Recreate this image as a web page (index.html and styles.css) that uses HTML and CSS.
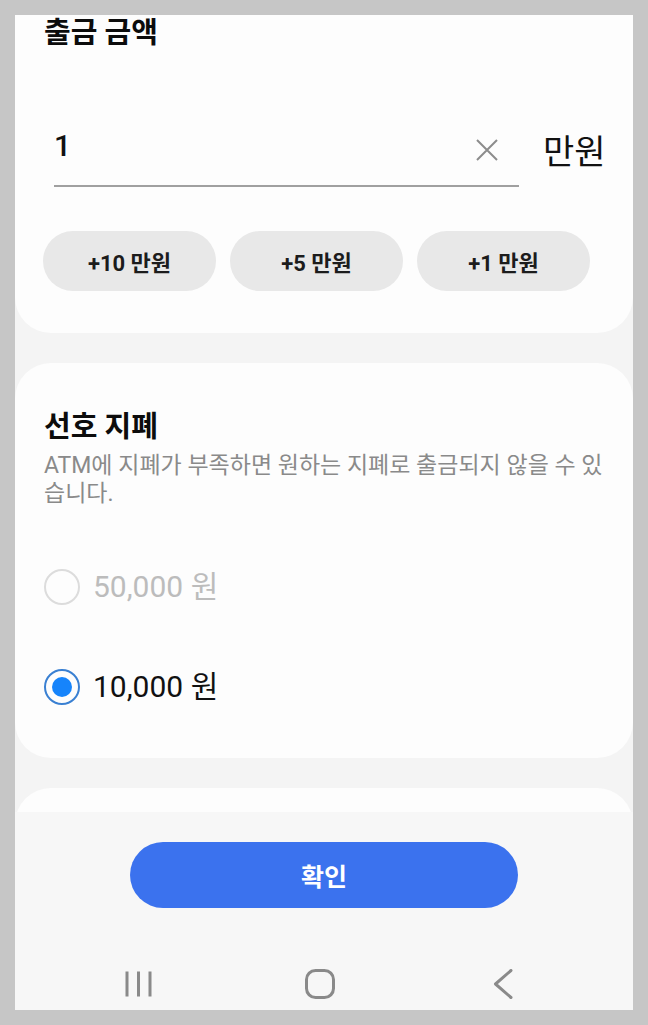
FILE: index.html
```html
<!DOCTYPE html>
<html lang="ko">

<head>
    <meta charset="UTF-8">
    <meta name="viewport" content="width=device-width, initial-scale=1.0">
    <title>출금 금액</title>
    <link rel="stylesheet" href="styles.css">
</head>

<body>
    <div class="screen">
        <main class="content">
            <!-- Amount -->
            <section class="card card-amount">
                <h2 class="card-title">출금 금액</h2>
                <div class="amount-row">
                    <div class="amount-input">
                        <span class="amount-value">1</span>
                        <svg class="clear-icon" width="22" height="22" viewBox="0 0 22 22">
                            <path d="M1 1 L21 21 M21 1 L1 21" stroke="#8c8c8c" stroke-width="2" fill="none" />
                        </svg>
                    </div>
                    <span class="amount-unit">만원</span>
                </div>
                <div class="chips">
                    <button class="chip">+10 만원</button>
                    <button class="chip">+5 만원</button>
                    <button class="chip">+1 만원</button>
                </div>
            </section>

            <!-- Preferred bills -->
            <section class="card card-bills">
                <h2 class="card-title">선호 지폐</h2>
                <p class="card-desc">ATM에 지폐가 부족하면 원하는 지폐로 출금되지 않을 수 있습니다.</p>
                <ul class="radio-list">
                    <li class="radio-item disabled">
                        <span class="radio"></span>
                        <span class="radio-label">50,000 원</span>
                    </li>
                    <li class="radio-item checked">
                        <span class="radio"></span>
                        <span class="radio-label">10,000 원</span>
                    </li>
                </ul>
            </section>

            <section class="card card-next"></section>
        </main>

        <footer class="bottom">
            <button class="btn-confirm">확인</button>
            <nav class="navbar">
                <svg class="nav-recent" width="28" height="28" viewBox="0 0 28 28">
                    <path d="M2 1.5 V26.5 M13.5 1.5 V26.5 M25 1.5 V26.5" stroke="#8a8a8a" stroke-width="3" fill="none" />
                </svg>
                <svg class="nav-home" width="30" height="30" viewBox="0 0 30 30">
                    <rect x="1.5" y="1.5" width="27" height="27" rx="9" stroke="#8a8a8a" stroke-width="3" fill="none" />
                </svg>
                <svg class="nav-back" width="20" height="30" viewBox="0 0 20 30">
                    <path d="M18 1.5 L2.5 15 L18 28.5" stroke="#8a8a8a" stroke-width="3" fill="none" stroke-linecap="round" stroke-linejoin="round" />
                </svg>
            </nav>
        </footer>
    </div>
</body>

</html>
```

FILE: styles.css
```css
* {
    margin: 0;
    padding: 0;
    box-sizing: border-box;
}

body {
    background: #c6c6c6;
    padding: 15px;
    font-family: "Roboto", "Noto Sans CJK KR", sans-serif;
    color: #111;
}

.screen {
    width: 618px;
    height: 995px;
    background: #f4f4f4;
    display: flex;
    flex-direction: column;
    overflow: hidden;
}

.content {
    flex: 1;
    overflow: hidden;
}

/* Cards */
.card {
    background: #fdfdfd;
    border-radius: 36px;
    padding: 0 29px;
    margin-bottom: 30px;
}

.card-amount {
    border-radius: 0 0 36px 36px;
    padding-bottom: 42px;
}

.card-bills {
    padding-top: 46px;
    padding-bottom: 21px;
}

.card-next {
    height: 200px;
}

.card-title {
    font-size: 29px;
    line-height: 36px;
    font-weight: 700;
    color: #0c0c0c;
}

/* Amount input */
.amount-row {
    display: flex;
    align-items: flex-start;
    margin-top: 77px;
}

.amount-input {
    display: flex;
    align-items: center;
    flex-shrink: 0;
    width: 465px;
    margin-left: 10px;
    padding-right: 21px;
    padding-bottom: 21px;
    border-bottom: 2px solid #a0a0a0;
}

.amount-value {
    flex: 1;
    font-size: 30px;
    line-height: 36px;
    font-weight: 500;
}

.clear-icon {
    margin-top: 8px;
}

.amount-unit {
    flex-shrink: 0;
    white-space: nowrap;
    margin-left: 24px;
    margin-top: 6px;
    font-size: 34px;
    line-height: 36px;
}

/* Quick add chips */
.chips {
    display: flex;
    gap: 14px;
    margin-top: 44px;
    margin-left: -1px;
}

.chip {
    width: 173px;
    height: 60px;
    border: none;
    border-radius: 30px;
    background: #e8e8e8;
    font-family: inherit;
    font-size: 22px;
    font-weight: 700;
    color: #1c1c1c;
}

/* Bills */
.card-desc {
    margin-top: 7px;
    font-size: 23px;
    line-height: 28px;
    color: #8a8a8a;
}

.radio-list {
    list-style: none;
    margin-top: 29px;
}

.radio-item {
    display: flex;
    align-items: center;
    height: 100px;
}

.radio {
    width: 36px;
    height: 36px;
    border-radius: 50%;
    border: 2px solid #dcdcdc;
    display: flex;
    align-items: center;
    justify-content: center;
}

.radio-label {
    margin-left: 13px;
    font-size: 30px;
    line-height: 36px;
}

.radio-item.disabled .radio-label {
    color: #bcbcbc;
}

.radio-item.checked .radio {
    border-color: #3a80d2;
}

.radio-item.checked .radio::after {
    content: "";
    width: 20px;
    height: 20px;
    border-radius: 50%;
    background: #1684fb;
}

/* Bottom */
.bottom {
    height: 198px;
    background: #f7f7f7;
    display: flex;
    flex-direction: column;
    align-items: center;
    padding-top: 30px;
}

.btn-confirm {
    width: 388px;
    height: 66px;
    border: none;
    border-radius: 33px;
    background: #3b72ee;
    color: #fff;
    font-family: inherit;
    font-size: 25px;
    font-weight: 700;
}

.navbar {
    align-self: stretch;
    display: flex;
    align-items: center;
    height: 52px;
    margin-top: 50px;
    padding-left: 110px;
}

.nav-home {
    margin-left: 152px;
}

.nav-back {
    margin-left: 158px;
}
```
